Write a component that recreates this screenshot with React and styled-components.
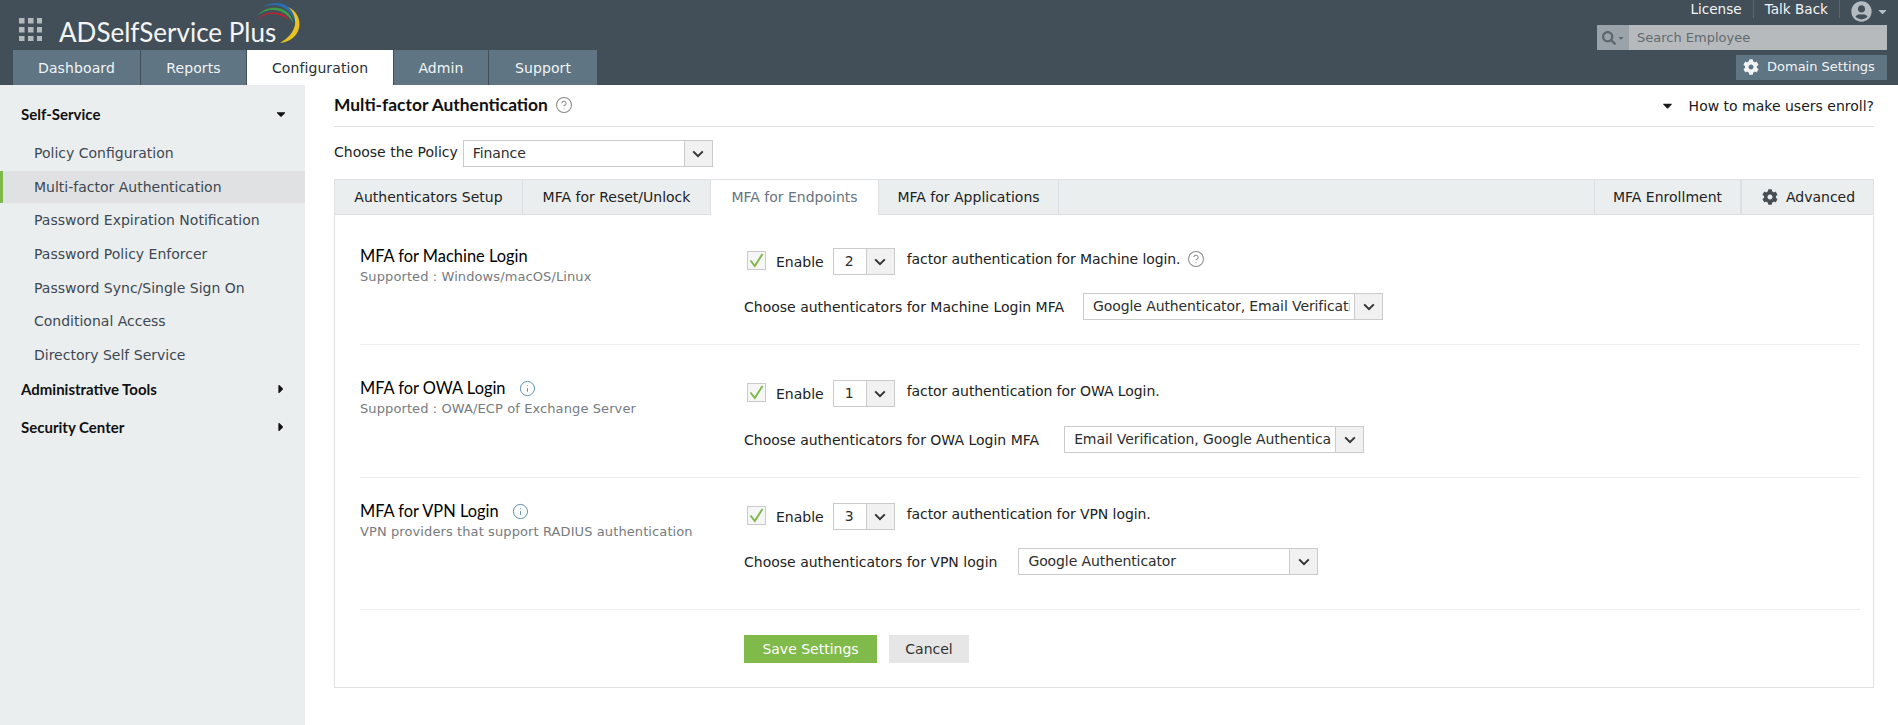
import React from "react";
import styled, { createGlobalStyle } from "styled-components";
import { FaCog, FaSearch, FaUserCircle, FaCaretDown, FaCaretRight } from "react-icons/fa";
import { CircleHelp, Info } from "lucide-react";

const Global = createGlobalStyle`
  html, body { margin: 0; padding: 0; background: #fff; }
  body { font-family: "DejaVu Sans", Verdana, sans-serif; font-size: 14px; color: #222; }
  * { box-sizing: border-box; }
`;

const Page = styled.div`
  width: 1898px;
  height: 725px;
  overflow: hidden;
  display: flex;
  flex-direction: column;
`;

const Header = styled.header`
  height: 85px;
  background: #434f58;
  display: flex;
  justify-content: space-between;
  flex: none;
`;
const HeaderLeft = styled.div`
  display: flex;
  flex-direction: column;
  padding-left: 13px;
`;
const Brand = styled.div`
  position: relative;
  height: 50px;
  display: flex;
  align-items: flex-start;
  padding: 18px 0 0 6px;
`;
const GridIcon = styled.svg`
  width: 23px;
  height: 23px;
  flex: none;
`;
const LogoText = styled.span`
  font-family: Lato, "Open Sans", sans-serif;
  font-size: 26px;
  line-height: 26px;
  color: #f4f5f5;
  margin-left: 17px;
  margin-top: 1px;
  white-space: nowrap;
`;
const Swoosh = styled.svg`
  position: absolute;
  left: 237px;
  top: 0;
  width: 55px;
  height: 48px;
`;
const NavTabs = styled.nav`
  display: flex;
  height: 35px;
  gap: 1px;
`;
const NavTab = styled.div`
  width: ${(p) => p.$w}px;
  display: flex;
  align-items: center;
  justify-content: center;
  font-size: 14px;
  letter-spacing: 0.1px;
  background: ${(p) => (p.$active ? "#fff" : "#5f7583")};
  color: ${(p) => (p.$active ? "#2a2f33" : "#f1f4f5")};
`;
const HeaderRight = styled.div`
  width: 301px;
  padding-right: 11px;
  display: flex;
  flex-direction: column;
  align-items: flex-end;
`;
const TopLinks = styled.div`
  height: 25px;
  display: flex;
  align-items: flex-start;
  color: #f2f4f5;
  font-size: 13.6px;
  line-height: 19px;
`;
const TopLink = styled.span`
  padding: 0 11px;
  height: 18px;
  border-right: 1px solid #5b6770;
`;
const AvatarWrap = styled.span`
  display: flex;
  align-items: center;
  margin-left: 11px;
  color: #b5bcc1;
  height: 21px;
  margin-top: 1px;
  svg:first-child { font-size: 21px; }
  svg:last-child { font-size: 13px; margin-left: 4px; margin-right: -2px; }
`;
const SearchBox = styled.div`
  width: 290px;
  height: 25px;
  display: flex;
  background: #b6babd;
`;
const SearchIcon = styled.div`
  width: 32px;
  background: #9aa3a9;
  display: flex;
  align-items: center;
  justify-content: center;
  color: #5c666d;
  svg:first-child { font-size: 14px; }
  svg:last-child { font-size: 8px; margin-left: 1px; }
`;
const SearchText = styled.div`
  padding-left: 8px;
  line-height: 25px;
  color: #626a70;
  font-size: 13px;
`;
const DomainButton = styled.div`
  margin-top: 5px;
  width: 151px;
  height: 25px;
  background: #5f7583;
  color: #f1f4f5;
  display: flex;
  align-items: center;
  padding: 0 0 2px 7px;
  gap: 8px;
  font-size: 13px;
  svg { font-size: 16px; flex: none; }
`;

const Body = styled.div`
  flex: 1;
  display: flex;
  min-height: 0;
`;
const Sidebar = styled.aside`
  width: 305px;
  flex: none;
  background: #ebeeef;
  padding-top: 14px;
`;
const SectionHead = styled.div`
  height: 30px;
  padding: 0 17px 0 21px;
  margin-top: ${(p) => p.$mt || 0}px;
  margin-bottom: ${(p) => p.$mb}px;
  display: flex;
  align-items: center;
  justify-content: space-between;
  font-family: Lato, sans-serif;
  font-weight: 700;
  font-size: 15px;
  color: #111;
  svg { font-size: 14px; }
`;
const SideItem = styled.div`
  height: 32px;
  margin-bottom: 1.7px;
  display: flex;
  align-items: center;
  padding-left: ${(p) => (p.$active ? "31px" : "34px")};
  font-size: 14px;
  color: #3d4852;
  background: ${(p) => (p.$active ? "#dfe1e3" : "transparent")};
  border-left: ${(p) => (p.$active ? "3px solid #7fb84a" : "0")};
`;

const Main = styled.main`
  flex: 1;
  padding: 0 24px 0 29px;
`;
const TitleRow = styled.div`
  height: 42px;
  border-bottom: 1px solid #e0e2e4;
  display: flex;
  align-items: center;
  justify-content: space-between;
`;
const TitleLeft = styled.div`
  display: flex;
  align-items: center;
  gap: 7px;
  color: #8b8b8b;
  margin-bottom: 2px;
`;
const Title = styled.h1`
  margin: 0;
  font-family: Lato, sans-serif;
  font-weight: 700;
  font-size: 17.4px;
  line-height: 22px;
  color: #111;
`;
const HowTo = styled.div`
  display: flex;
  align-items: center;
  gap: 14px;
  font-size: 14px;
  color: #1a1a1a;
  svg { font-size: 15px; }
`;
const PolicyRow = styled.div`
  margin-top: 13px;
  display: flex;
  align-items: center;
  gap: 5px;
  font-size: 14px;
`;
const PolicyLabel = styled.span`
  margin-bottom: 3px;
`;
const SelectBox = styled.div`
  width: ${(p) => p.$w}px;
  height: 27px;
  flex: none;
  border: 1px solid #c9cbcd;
  background: #fff;
  display: flex;
`;
const SelectValue = styled.div`
  flex: 1;
  min-width: 0;
  margin-right: 4px;
  padding-left: ${(p) => p.$pad || 9}px;
  line-height: 25px;
  font-size: 14px;
  letter-spacing: -0.1px;
  color: #2d2d2d;
  white-space: nowrap;
  overflow: hidden;
`;
const SelectArrow = styled.div`
  width: ${(p) => p.$w || 28}px;
  flex: none;
  border-left: 1px solid #c9cbcd;
  background: #f1f1f1;
  display: flex;
  align-items: center;
  justify-content: center;
`;
const Panel = styled.section`
  margin-top: 12px;
  border: 1px solid #e0e3e5;
  height: 509px;
`;
const TabBar = styled.div`
  height: 35px;
  background: #ebeeef;
  display: flex;
  justify-content: space-between;
`;
const TabGroup = styled.div`
  display: flex;
`;
const Tab = styled.div`
  width: ${(p) => p.$w}px;
  display: flex;
  align-items: center;
  justify-content: center;
  gap: 8px;
  font-size: 14px;
  padding-left: ${(p) => (p.$icon ? "3px" : "0")};
  color: ${(p) => (p.$active ? "#69747c" : "#222")};
  background: ${(p) => (p.$active ? "#fff" : "transparent")};
  border-bottom: 1px solid ${(p) => (p.$active ? "#fff" : "#dde0e2")};
  border-right: 1px solid ${(p) => (p.$last ? "transparent" : "#dde0e2")};
  border-left: ${(p) => (p.$first ? "1px solid #dde0e2" : "0")};
  svg { font-size: 16px; color: #474f55; }
`;
const TabFill = styled.div`
  flex: 1;
  border-bottom: 1px solid #dde0e2;
`;
const Content = styled.div`
  padding: 0 13px 0 25px;
`;
const Row = styled.div`
  display: grid;
  grid-template-columns: 384px 1fr;
  padding-top: ${(p) => p.$top}px;
  padding-bottom: ${(p) => p.$bottom}px;
  border-bottom: 1px solid #eceeef;
`;
const RowHead = styled.div`
  display: flex;
  flex-direction: column;
  gap: 2px;
  margin-top: -2px;
`;
const RowTitle = styled.div`
  display: flex;
  align-items: center;
  gap: 13px;
  font-family: Lato, sans-serif;
  font-weight: 400;
  font-size: 16.4px;
  line-height: 20px;
  color: #000;
  svg { color: #5b8fb0; }
`;
const RowSub = styled.div`
  font-size: 13px;
  line-height: 18px;
  color: #767b7f;
  letter-spacing: 0.1px;
`;
const RowBody = styled.div`
  display: flex;
  flex-direction: column;
  gap: ${(p) => p.$gap}px;
`;
const EnableLine = styled.div`
  display: flex;
  align-items: center;
  padding-left: 3px;
  font-size: 14px;
`;
const CheckBox = styled.span`
  width: 19px;
  height: 19px;
  border: 1px solid #c8cacb;
  background: #f6f6f6;
  flex: none;
  display: flex;
  align-items: center;
  justify-content: center;
  margin-bottom: 3px;
`;
const EnableLabel = styled.span`
  margin: 0 9px 0 10px;
`;
const FactorText = styled.span`
  margin-left: 12px;
  margin-bottom: 6px;
  letter-spacing: -0.08px;
`;
const HelpSlot = styled.span`
  margin-left: 6px;
  margin-bottom: 6px;
  display: flex;
  color: #8b8b8b;
`;
const ChooseLine = styled.div`
  display: flex;
  align-items: center;
  font-size: 14px;
  gap: ${(p) => p.$gap}px;
`;
const ButtonRow = styled.div`
  padding: 25px 0 0 384px;
  display: flex;
  gap: 12px;
`;
const SaveButton = styled.div`
  width: 133px;
  height: 28px;
  background: #7fba4b;
  color: #fff;
  display: flex;
  align-items: center;
  justify-content: center;
  font-size: 14px;
  padding-bottom: 1px;
`;
const CancelButton = styled.div`
  width: 80px;
  height: 28px;
  background: #e6e6e6;
  color: #333;
  display: flex;
  align-items: center;
  justify-content: center;
  font-size: 14px;
  padding-bottom: 1px;
`;

const Chevron = () => (
  <svg width="12" height="8" viewBox="0 0 12 8">
    <path d="M1.2 1.4 L6 6.2 L10.8 1.4" fill="none" stroke="#333" strokeWidth="2" />
  </svg>
);
const Tick = () => (
  <svg width="15" height="15" viewBox="0 0 15 15">
    <path d="M1.5 7.5 L5.8 13 L13.5 1" fill="none" stroke="#7fba4b" strokeWidth="2" />
  </svg>
);

const Logo = () => (
  <Swoosh viewBox="250 0 55 48">
    <path d="M263 7 C272 1 287 1 293 13 C297 20 298 24 297 28 C295 20 290 10 282 7 C276 4 268 5 263 7 Z" fill="#2a6cb0" />
    <path d="M258 15 C265 6 282 5 289 14 C292 18 293 21 293 23 C288 14 281 10 273 10 C267 10 262 12 258 15 Z" fill="#3f9a4a" />
    <path d="M257 20 C263 11 280 10 287 17 L289 20 C282 15 275 13 270 14 C264 15 260 17 257 20 Z" fill="#c8202c" />
    <path d="M288 7 C297 11 301 20 299 28 C297 37 289 42 280 43 C288 38 293 33 295 25 C296 18 293 11 288 7 Z" fill="#e8c321" />
  </Swoosh>
);

const grid = [0, 1, 2].flatMap((r) => [0, 1, 2].map((c) => [c, r]));
const sideItems = [
  "Policy Configuration",
  "Multi-factor Authentication",
  "Password Expiration Notification",
  "Password Policy Enforcer",
  "Password Sync/Single Sign On",
  "Conditional Access",
  "Directory Self Service",
];
const rows = [
  {
    title: "MFA for Machine Login",
    sub: "Supported : Windows/macOS/Linux",
    n: "2",
    factor: "factor authentication for Machine login.",
    help: true,
    choose: "Choose authenticators for Machine Login MFA",
    value: "Google Authenticator, Email Verification",
    w: 300,
    top: 33,
    bottom: 24,
    gap: 18,
    chooseGap: 19,
  },
  {
    title: "MFA for OWA Login",
    info: true,
    sub: "Supported : OWA/ECP of Exchange Server",
    n: "1",
    factor: "factor authentication for OWA Login.",
    choose: "Choose authenticators for OWA Login MFA",
    value: "Email Verification, Google Authenticator",
    w: 300,
    top: 35,
    bottom: 24,
    gap: 19,
    chooseGap: 25,
  },
  {
    title: "MFA for VPN Login",
    info: true,
    sub: "VPN providers that support RADIUS authentication",
    n: "3",
    factor: "factor authentication for VPN login.",
    choose: "Choose authenticators for VPN login",
    value: "Google Authenticator",
    w: 300,
    top: 25,
    bottom: 34,
    gap: 18,
    chooseGap: 21,
  },
];

export default function App() {
  return (
    <Page>
      <Global />
      <Header>
        <HeaderLeft>
          <Brand>
            <GridIcon viewBox="0 0 23 23">
              {grid.map(([c, r]) => (
                <rect key={`${c}${r}`} x={c * 9} y={r * 9} width="5.5" height="5.5" fill="#b4b9bc" />
              ))}
            </GridIcon>
            <LogoText>ADSelfService Plus</LogoText>
            <Logo />
          </Brand>
          <NavTabs>
            <NavTab $w={127}>Dashboard</NavTab>
            <NavTab $w={105}>Reports</NavTab>
            <NavTab $w={146} $active>Configuration</NavTab>
            <NavTab $w={94}>Admin</NavTab>
            <NavTab $w={108}>Support</NavTab>
          </NavTabs>
        </HeaderLeft>
        <HeaderRight>
          <TopLinks>
            <TopLink>License</TopLink>
            <TopLink>Talk Back</TopLink>
            <AvatarWrap>
              <FaUserCircle />
              <FaCaretDown />
            </AvatarWrap>
          </TopLinks>
          <SearchBox>
            <SearchIcon>
              <FaSearch />
              <FaCaretDown />
            </SearchIcon>
            <SearchText>Search Employee</SearchText>
          </SearchBox>
          <DomainButton>
            <FaCog />
            Domain Settings
          </DomainButton>
        </HeaderRight>
      </Header>
      <Body>
        <Sidebar>
          <SectionHead $mb={8}>
            Self-Service
            <FaCaretDown />
          </SectionHead>
          {sideItems.map((s) => (
            <SideItem key={s} $active={s === "Multi-factor Authentication"}>{s}</SideItem>
          ))}
          <SectionHead $mt={3} $mb={8}>
            Administrative Tools
            <FaCaretRight />
          </SectionHead>
          <SectionHead $mb={8}>
            Security Center
            <FaCaretRight />
          </SectionHead>
        </Sidebar>
        <Main>
          <TitleRow>
            <TitleLeft>
              <Title>Multi-factor Authentication</Title>
              <CircleHelp size={18} strokeWidth={1.4} />
            </TitleLeft>
            <HowTo>
              <FaCaretDown />
              How to make users enroll?
            </HowTo>
          </TitleRow>
          <PolicyRow>
            <PolicyLabel>Choose the Policy</PolicyLabel>
            <SelectBox $w={250}>
              <SelectValue>Finance</SelectValue>
              <SelectArrow><Chevron /></SelectArrow>
            </SelectBox>
          </PolicyRow>
          <Panel>
            <TabBar>
              <TabGroup>
                <Tab $w={188}>Authenticators Setup</Tab>
                <Tab $w={188}>MFA for Reset/Unlock</Tab>
                <Tab $w={168} $active>MFA for Endpoints</Tab>
                <Tab $w={180}>MFA for Applications</Tab>
              </TabGroup>
              <TabFill />
              <TabGroup>
                <Tab $w={147} $first>MFA Enrollment</Tab>
                <Tab $w={132} $first $last $icon><FaCog />Advanced</Tab>
              </TabGroup>
            </TabBar>
            <Content>
              {rows.map((r) => (
                <Row key={r.title} $top={r.top} $bottom={r.bottom}>
                  <RowHead>
                    <RowTitle>
                      {r.title}
                      {r.info && <Info size={17} strokeWidth={1.4} />}
                    </RowTitle>
                    <RowSub>{r.sub}</RowSub>
                  </RowHead>
                  <RowBody $gap={r.gap}>
                    <EnableLine>
                      <CheckBox><Tick /></CheckBox>
                      <EnableLabel>Enable</EnableLabel>
                      <SelectBox $w={62}>
                        <SelectValue $pad={11}>{r.n}</SelectValue>
                        <SelectArrow><Chevron /></SelectArrow>
                      </SelectBox>
                      <FactorText>{r.factor}</FactorText>
                      {r.help && (
                        <HelpSlot><CircleHelp size={18} strokeWidth={1.4} /></HelpSlot>
                      )}
                    </EnableLine>
                    <ChooseLine $gap={r.chooseGap}>
                      {r.choose}
                      <SelectBox $w={r.w}>
                        <SelectValue>{r.value}</SelectValue>
                        <SelectArrow><Chevron /></SelectArrow>
                      </SelectBox>
                    </ChooseLine>
                  </RowBody>
                </Row>
              ))}
              <ButtonRow>
                <SaveButton>Save Settings</SaveButton>
                <CancelButton>Cancel</CancelButton>
              </ButtonRow>
            </Content>
          </Panel>
        </Main>
      </Body>
    </Page>
  );
}
